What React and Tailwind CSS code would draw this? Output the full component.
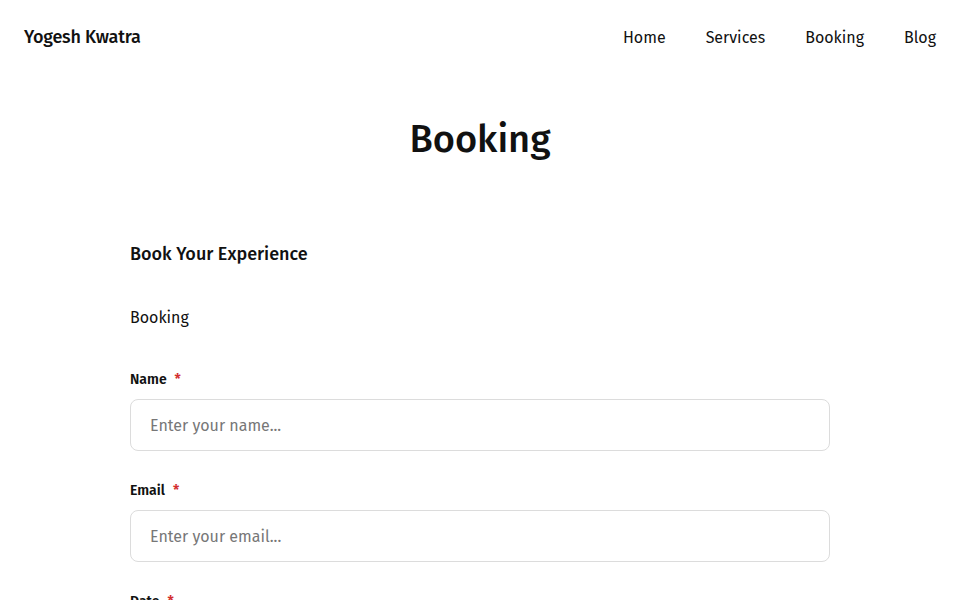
import React from "react";

const font = { fontFamily: '"Fira Sans", "Open Sans", "Noto Sans", sans-serif' };

function Field({ label, placeholder }) {
  return (
    <div className="flex flex-col">
      <label className="flex items-center gap-2 text-[14px] font-semibold text-[#111] leading-[18px]">
        <span>{label}</span>
        <span className="text-[#d32f2f]">*</span>
      </label>
      <input
        placeholder={placeholder}
        className="mt-[10px] h-[52px] w-full rounded-[8px] border border-[#dcdcdc] bg-white px-[19px] text-[16px] text-[#333] placeholder:text-[#777] outline-none"
        style={font}
      />
    </div>
  );
}

export default function App() {
  return (
    <div className="min-h-[600px] bg-white text-[#111]" style={font}>
      <header className="flex h-[74px] items-center justify-between px-6">
        <div className="text-[18px] font-medium tracking-[-0.2px]">Yogesh Kwatra</div>
        <nav className="flex gap-10 text-[16px] pt-[1px]">
          <a>Home</a>
          <a>Services</a>
          <a>Booking</a>
          <a>Blog</a>
        </nav>
      </header>
      <h1 className="mt-[41px] text-center text-[38px] font-medium leading-[48px]">Booking</h1>
      <main className="mx-auto mt-[79px] w-[700px]">
        <h2 className="text-[18px] font-medium leading-[24px]">Book Your Experience</h2>
        <p className="mt-[40px] text-[16px] leading-[24px]">Booking</p>
        <div className="mt-[41px] flex flex-col gap-[31px]">
          <Field label="Name" placeholder="Enter your name..." />
          <Field label="Email" placeholder="Enter your email..." />
          <Field label="Date" placeholder="" />
        </div>
      </main>
    </div>
  );
}
